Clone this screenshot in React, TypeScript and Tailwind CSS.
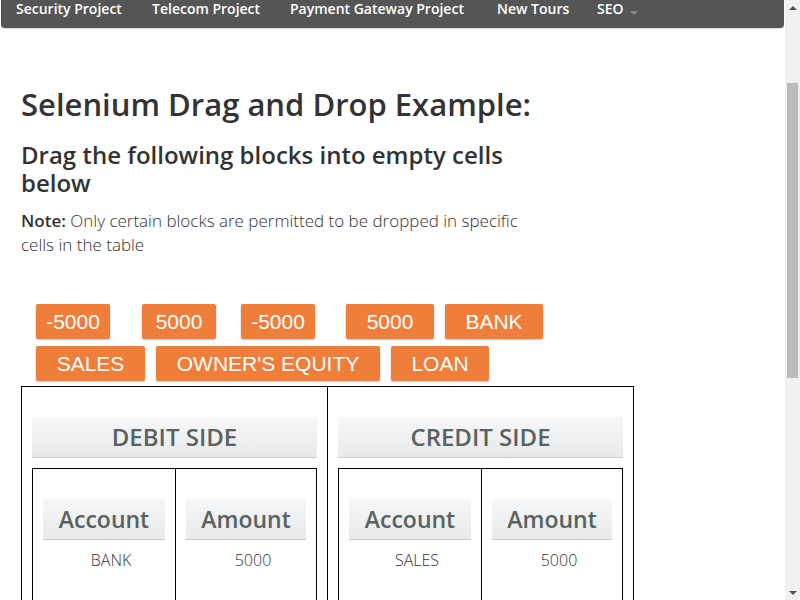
import React from "react";

const navItems = [
  { label: "Security Project", w: "w-[136px]" },
  { label: "Telecom Project", w: "w-[138px]" },
  { label: "Payment Gateway Project", w: "w-[207px]" },
  { label: "New Tours", w: "w-[100px]" },
  { label: "SEO", w: "" },
];

const blocksRow1 = [
  { label: "-5000", w: "w-[74px]", mr: "mr-[32px]" },
  { label: "5000", w: "w-[74px]", mr: "mr-[25px]" },
  { label: "-5000", w: "w-[74px]", mr: "mr-[31px]" },
  { label: "5000", w: "w-[88px]", mr: "mr-[11px]" },
  { label: "BANK", w: "w-[98px]", mr: "" },
];

const blocksRow2 = [
  { label: "SALES", w: "w-[109px]", mr: "mr-[11px]" },
  { label: "OWNER'S EQUITY", w: "w-[224px]", mr: "mr-[11px]" },
  { label: "LOAN", w: "w-[98px]", mr: "" },
];

function Block({ label, w, mr }: { label: string; w: string; mr: string }) {
  return (
    <div
      className={
        w +
        " " +
        mr +
        " h-[35px] flex items-center justify-center rounded-[2px] bg-[#ef7e3b] text-white text-[21px] shadow-[0_1px_2px_rgba(0,0,0,0.25)] cursor-move"
      }
      style={{ fontFamily: "'Liberation Sans', Arial, sans-serif" }}
    >
      {label}
    </div>
  );
}

function HeadBar({ children, size }: { children: React.ReactNode; size: string }) {
  return (
    <div
      className={
        "h-[41px] flex items-center justify-center rounded-t-[2px] bg-gradient-to-b from-[#f6f7f8] to-[#e7e9eb] border-b border-[#c9cdd0] text-[#59625f] font-semibold " +
        size
      }
    >
      {children}
    </div>
  );
}

function Side({ title, account, amount }: { title: string; account: string; amount: string }) {
  return (
    <div className="px-[10px] pt-[30px] pb-[40px]">
      <HeadBar size="text-[24px]">{title}</HeadBar>
      <div className="mt-[10px] border border-black flex h-[420px]">
        <div className="w-[143px] border-r border-black px-[10px] pt-[30px]">
          <HeadBar size="text-[23px]">Account</HeadBar>
          <div className="pl-[14px] text-center text-[16px] font-light text-[#333] mt-[8px]">{account}</div>
        </div>
        <div className="flex-1 px-[10px] pt-[30px]">
          <HeadBar size="text-[23px]">Amount</HeadBar>
          <div className="pl-[14px] text-center text-[16px] font-light text-[#333] mt-[8px]">{amount}</div>
        </div>
      </div>
    </div>
  );
}

function Scrollbar() {
  return (
    <div className="w-[15px] shrink-0 bg-[#f1f1f1] flex flex-col">
      <div className="h-[15px] flex items-center justify-center">
        <span className="w-0 h-0 border-l-[4px] border-r-[4px] border-b-[4px] border-l-transparent border-r-transparent border-b-[#505050]" />
      </div>
      <div className="flex-1 pt-[68px] px-[2px]">
        <div className="h-[295px] bg-[#bcbcbc]" />
      </div>
      <div className="h-[15px] flex items-center justify-center">
        <span className="w-0 h-0 border-l-[4px] border-r-[4px] border-t-[4px] border-l-transparent border-r-transparent border-t-[#505050]" />
      </div>
    </div>
  );
}

export default function App() {
  return (
    <div className="h-screen flex overflow-hidden bg-white text-[#333]" style={{ fontFamily: "'Open Sans', 'Noto Sans', sans-serif" }}>
      <div className="flex-1 min-w-0 overflow-hidden">
        <nav className="mx-px h-[28px] bg-[#555] rounded-b-[4px] shadow-[0_1px_1px_rgba(0,0,0,0.15)] flex items-start pl-[15px] text-white text-[14px] font-semibold leading-[18px]">
          {navItems.map((item) => (
            <div key={item.label} className={"flex items-center whitespace-nowrap " + item.w}>
              {item.label}
              {item.label === "SEO" && (
                <span className="ml-[6px] mt-[8px] w-0 h-0 border-l-[4px] border-r-[4px] border-t-[4px] border-l-transparent border-r-transparent border-t-[#888]" />
              )}
            </div>
          ))}
        </nav>

        <main className="px-[21px]">
          <h2 className="mt-[58px] text-[31px] font-semibold leading-[36px]">Selenium Drag and Drop Example:</h2>
          <h3 className="mt-[19px] w-[540px] text-[24px] font-semibold leading-[28px]">
            Drag the following blocks into empty cells below
          </h3>
          <p className="mt-[12px] w-[520px] text-[17px] leading-[24px] font-light">
            <span className="font-semibold">Note:</span> Only certain blocks are permitted to be dropped in specific cells in the table
          </p>

          <div className="mt-[47px] pl-[15px] flex flex-col gap-[7px]">
            <div className="flex">
              {blocksRow1.map((b, i) => (
                <Block key={i} {...b} />
              ))}
            </div>
            <div className="flex">
              {blocksRow2.map((b, i) => (
                <Block key={i} {...b} />
              ))}
            </div>
          </div>

          <div className="mt-[5px] w-[613px] border border-black flex">
            <div className="flex-1 border-r border-black">
              <Side title="DEBIT SIDE" account="BANK" amount="5000" />
            </div>
            <div className="flex-1">
              <Side title="CREDIT SIDE" account="SALES" amount="5000" />
            </div>
          </div>
        </main>
      </div>
      <Scrollbar />
    </div>
  );
}
